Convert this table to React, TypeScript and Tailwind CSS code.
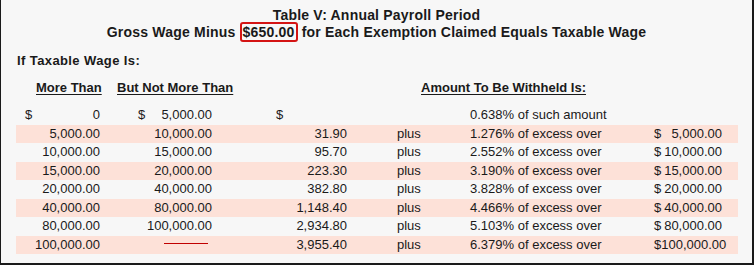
type Row = {
  a: string;
  b: string | null;
  c: string;
  plus: boolean;
  rate: string;
  over: string;
  shaded: boolean;
  dollars?: boolean;
};

const rows: Row[] = [
  { a: '0', b: '5,000.00', c: '', plus: false, rate: '0.638% of such amount', over: '', shaded: false, dollars: true },
  { a: '5,000.00', b: '10,000.00', c: '31.90', plus: true, rate: '1.276% of excess over', over: '5,000.00', shaded: true },
  { a: '10,000.00', b: '15,000.00', c: '95.70', plus: true, rate: '2.552% of excess over', over: '10,000.00', shaded: false },
  { a: '15,000.00', b: '20,000.00', c: '223.30', plus: true, rate: '3.190% of excess over', over: '15,000.00', shaded: true },
  { a: '20,000.00', b: '40,000.00', c: '382.80', plus: true, rate: '3.828% of excess over', over: '20,000.00', shaded: false },
  { a: '40,000.00', b: '80,000.00', c: '1,148.40', plus: true, rate: '4.466% of excess over', over: '40,000.00', shaded: true },
  { a: '80,000.00', b: '100,000.00', c: '2,934.80', plus: true, rate: '5.103% of excess over', over: '80,000.00', shaded: false },
  { a: '100,000.00', b: null, c: '3,955.40', plus: true, rate: '6.379% of excess over', over: '100,000.00', shaded: true },
];

function WageRow({ row }: { row: Row }) {
  return (
    <div className={`flex h-[18.5px] w-[722px] items-center leading-[18px] ${row.shaded ? 'bg-[#fde1d8]' : ''}`}>
      <div className={`flex w-[84px] pl-[9px] ${row.dollars ? 'justify-between' : 'justify-end'}`}>
        {row.dollars && <span>$</span>}
        <span>{row.a}</span>
      </div>
      <div className={`flex w-[112px] items-center pl-[38px] ${row.dollars ? 'justify-between' : 'justify-end'}`}>
        {row.dollars && <span>$</span>}
        {row.b === null ? (
          <span className="mr-[4px] -mt-[2px] inline-block h-px w-[44px] bg-[#c00000]" />
        ) : (
          <span>{row.b}</span>
        )}
      </div>
      <div className={`flex w-[135px] pl-[64px] ${row.dollars ? 'justify-between' : 'justify-end'}`}>
        {row.dollars && <span>$</span>}
        <span>{row.c}</span>
      </div>
      <div className="w-[123px] pl-[50px]">{row.plus ? 'plus' : ''}</div>
      <div className="w-[184px]">{row.rate}</div>
      <div className="flex w-[68px] justify-between">
        {row.over && <span>$</span>}
        <span>{row.over}</span>
      </div>
    </div>
  );
}

export default function App() {
  return (
    <div className="h-[265px] w-[754px] border-b-2 border-l border-r-2 border-[#1a1a1a] bg-[#f7f7f7] font-['Liberation_Sans',Arial,sans-serif] text-[#1a1a1a]">
      {/* Title */}
      <div className="pt-[7px] text-center text-[14px] font-bold leading-[17px] tracking-[0.2px]">
        <div>Table V: Annual Payroll Period</div>
        <div>
          Gross Wage Minus{' '}
          <span className="rounded-[3px] border-2 border-[#d41414] px-px">$650.00</span>
          {' '}for Each Exemption Claimed Equals Taxable Wage
        </div>
      </div>

      <div className="mt-[11px] pl-[16px] text-[13px] font-bold leading-[17px] tracking-[0.4px]">If Taxable Wage Is:</div>

      {/* Column headers */}
      <div className="mt-[10px] flex text-[13px] font-bold leading-[17px] underline underline-offset-2">
        <div className="w-[116px] pl-[35px]">More Than</div>
        <div className="w-[304px]">But Not More Than</div>
        <div>Amount To Be Withheld Is:</div>
      </div>

      {/* Rows */}
      <div className="ml-[15px] mt-[10px] text-[13px]">
        {rows.map((row, i) => (
          <WageRow key={i} row={row} />
        ))}
      </div>
    </div>
  );
}
